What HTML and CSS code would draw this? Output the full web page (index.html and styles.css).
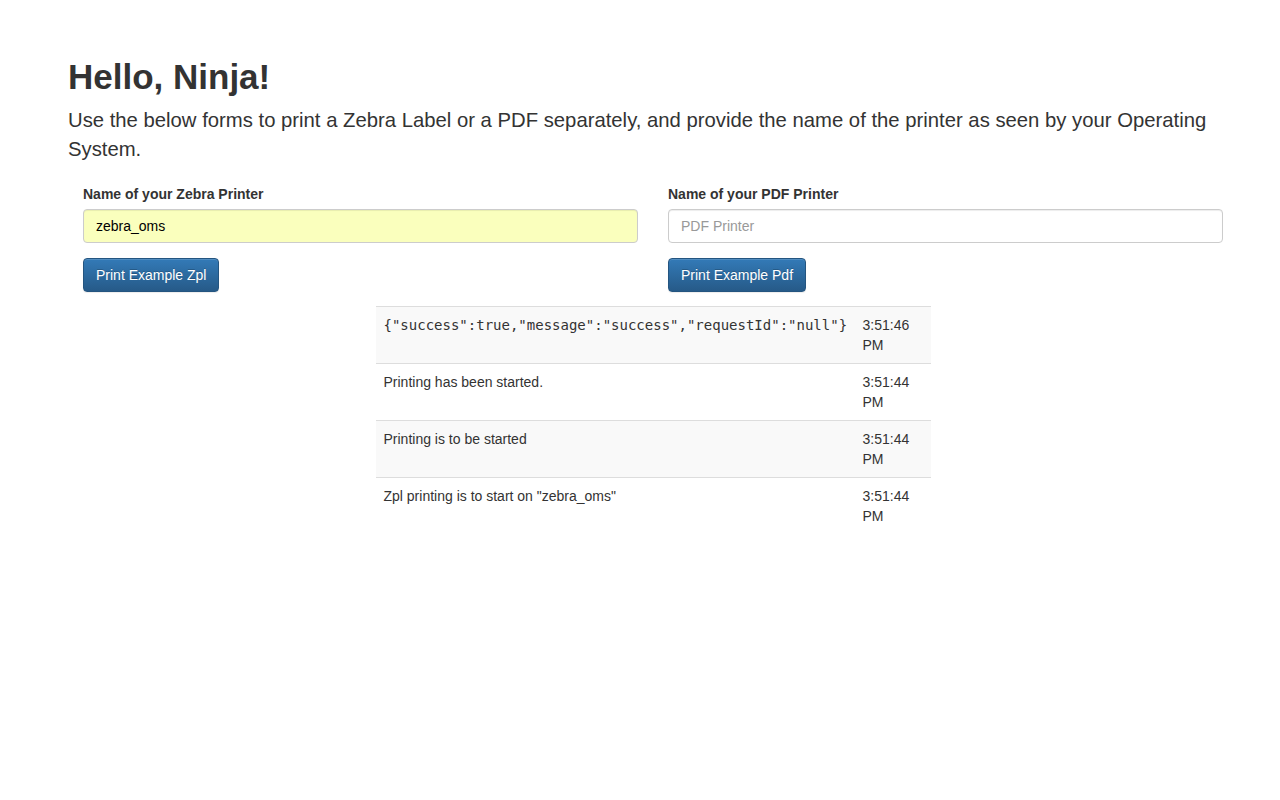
FILE: index.html
```html
<!DOCTYPE html>
<html>
<head>
<meta charset="utf-8">
<title>Hello, Ninja!</title>
<link rel="stylesheet" href="styles.css">
</head>
<body>
<div class="container">
  <h1 class="title">Hello, Ninja!</h1>
  <p class="lead">Use the below forms to print a Zebra Label or a PDF separately, and provide the name of the printer as seen by your Operating System.</p>
  <div class="row">
    <div class="col">
      <label class="label">Name of your Zebra Printer</label>
      <input class="input autofilled" type="text" value="zebra_oms">
      <button class="btn">Print Example Zpl</button>
    </div>
    <div class="col">
      <label class="label">Name of your PDF Printer</label>
      <input class="input" type="text" placeholder="PDF Printer">
      <button class="btn">Print Example Pdf</button>
    </div>
  </div>
  <div class="log-wrap">
    <table class="log">
      <tbody>
        <tr><td class="msg mono">{"success":true,"message":"success","requestId":"null"}</td><td class="time">3:51:46 PM</td></tr>
        <tr><td class="msg">Printing has been started.</td><td class="time">3:51:44 PM</td></tr>
        <tr><td class="msg">Printing is to be started</td><td class="time">3:51:44 PM</td></tr>
        <tr><td class="msg">Zpl printing is to start on "zebra_oms"</td><td class="time">3:51:44 PM</td></tr>
      </tbody>
    </table>
  </div>
</div>
</body>
</html>
```
FILE: styles.css
```css
* { box-sizing: border-box; }
html, body { margin: 0; padding: 0; background: #fff; }
body {
  font-family: "Liberation Sans", Arial, sans-serif;
  font-size: 14px;
  line-height: 20px;
  color: #333;
}
.container {
  width: 1170px;
  margin-left: 68px;
  padding-top: 57px;
}
.title {
  font-size: 35px;
  line-height: 40px;
  font-weight: bold;
  margin: 0 0 9px 0;
}
.lead {
  font-size: 20.3px;
  line-height: 29px;
  font-weight: 300;
  margin: 0 0 20px 0;
  padding-right: 20px;
}
.row {
  display: flex;
}
.col {
  width: 585px;
  padding: 0 15px;
  display: flex;
  flex-direction: column;
  align-items: flex-start;
}
.label {
  font-weight: bold;
  display: block;
  margin-bottom: 5px;
}
.input {
  width: 100%;
  height: 34px;
  padding: 6px 12px;
  font-family: "Liberation Sans", Arial, sans-serif;
  font-size: 14px;
  color: #000;
  background: #fff;
  border: 1px solid #ccc;
  border-radius: 4px;
  box-shadow: inset 0 1px 1px rgba(0,0,0,.075);
  margin-bottom: 15px;
  outline: none;
}
.input::placeholder { color: #999; }
.autofilled { background: #faffbd; }
.btn {
  height: 34px;
  padding: 6px 12px;
  font-family: "Liberation Sans", Arial, sans-serif;
  font-size: 14px;
  line-height: 20px;
  color: #fff;
  background-image: linear-gradient(to bottom, #337ab7 0, #265a88 100%);
  border: 1px solid #245580;
  border-radius: 4px;
  text-shadow: 0 -1px 0 rgba(0,0,0,.2);
  box-shadow: inset 0 1px 0 rgba(255,255,255,.15), 0 1px 1px rgba(0,0,0,.075);
  cursor: pointer;
}
.log-wrap {
  display: flex;
  justify-content: center;
  margin-top: 14px;
}
.log {
  width: 555px;
  border-collapse: collapse;
  border-spacing: 0;
  table-layout: fixed;
}
.log td {
  padding: 8px;
  vertical-align: top;
  border-top: 1px solid #ddd;
  line-height: 20px;
}
.log tr:nth-child(odd) td { background: #f9f9f9; }
.log .msg { width: 479px; }
.log .time { width: 76px; }
.mono {
  font-family: "DejaVu Sans Mono", "Liberation Mono", monospace;
  font-size: 14px;
}
```
